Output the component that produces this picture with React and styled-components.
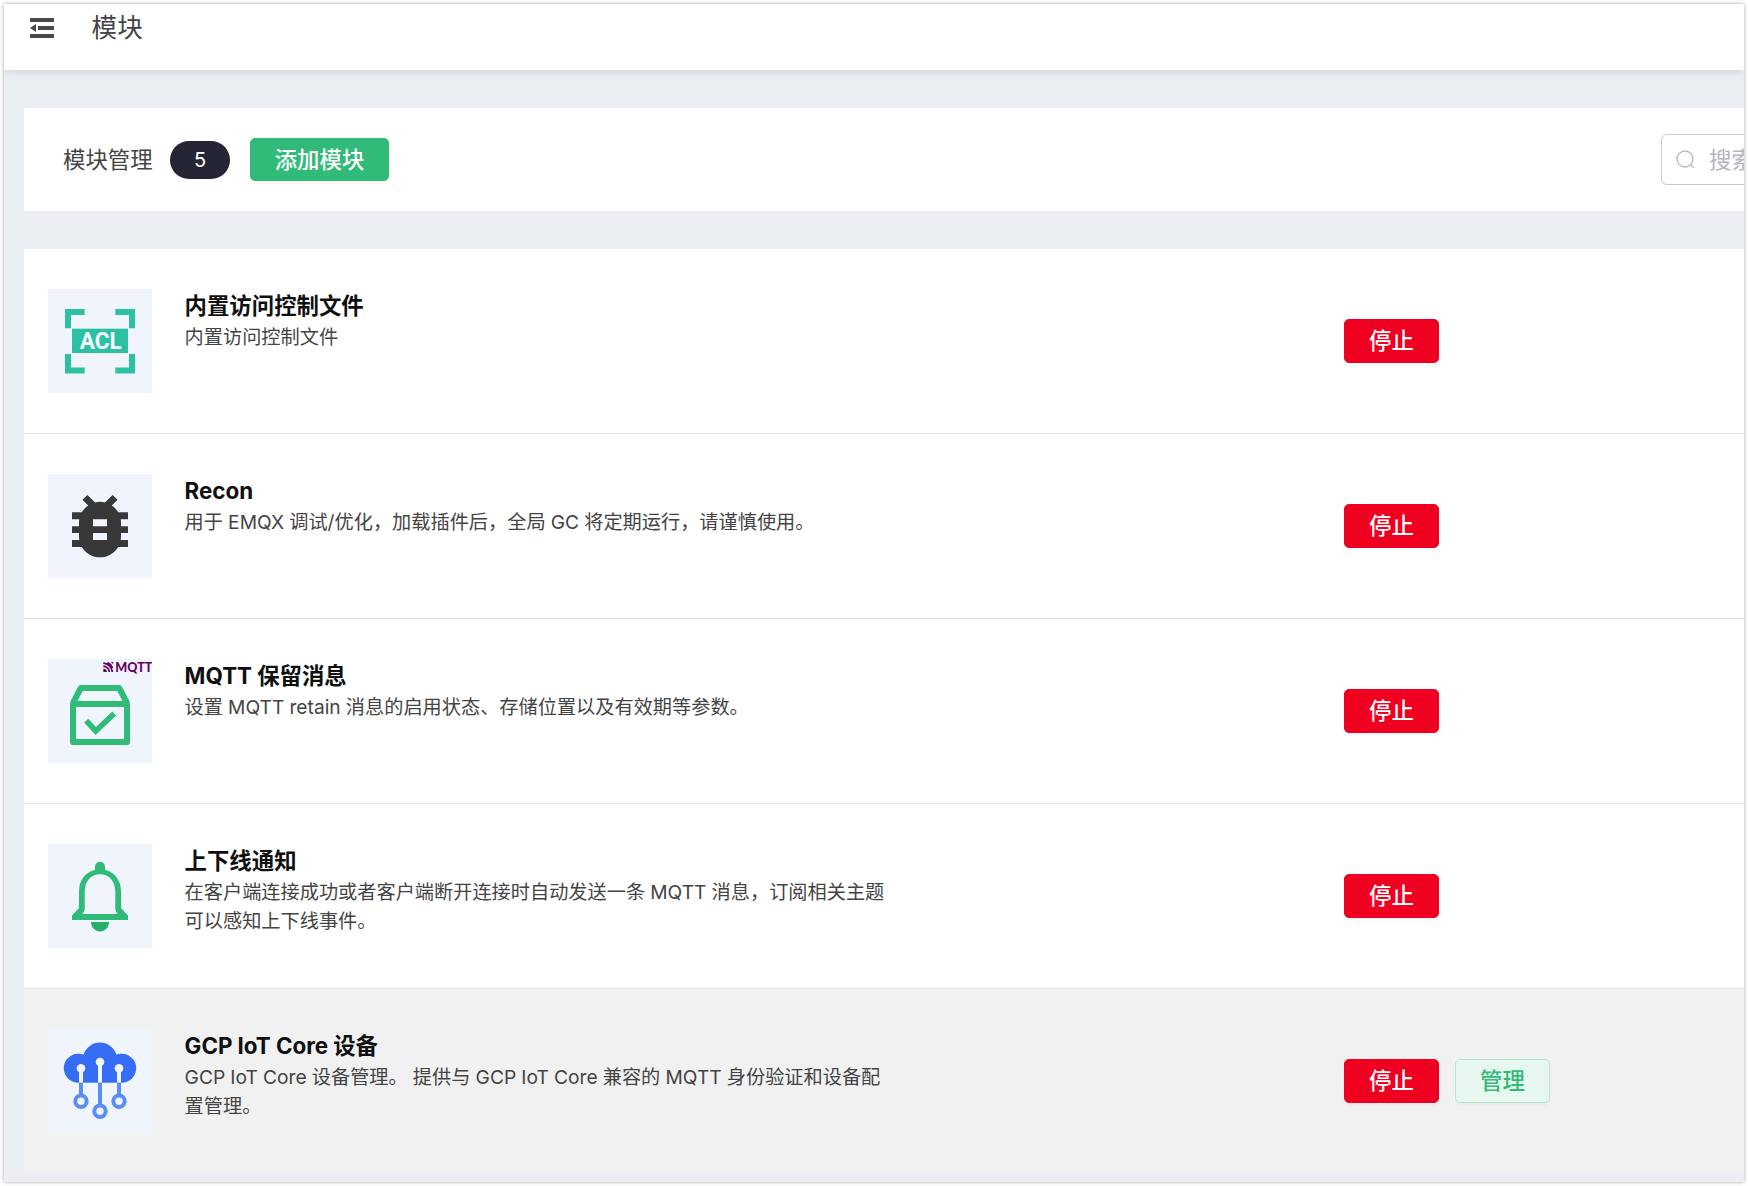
import React from "react";
import styled, { createGlobalStyle, css } from "styled-components";

const GlobalStyle = createGlobalStyle`
  *, *::before, *::after { box-sizing: border-box; }
  body {
    margin: 0;
    background: #fff;
    overflow: hidden;
    font-family: Inter, "Noto Sans CJK SC", sans-serif;
    font-size: 22.4px;
    color: #444;
  }
`;

const Page = styled.div`
  height: 1186px;
  padding: 4px;
`;

const Frame = styled.div`
  height: 1178px;
  background: #ebeef3;
  box-shadow: 0 0 4px rgba(0, 0, 0, 0.35);
  display: flex;
  flex-direction: column;
  overflow: hidden;
`;

const Header = styled.header`
  flex: none;
  height: 66px;
  padding: 0 26px;
  background: #fff;
  box-shadow: 0 1px 8px rgba(0, 21, 41, 0.14);
  display: flex;
  align-items: flex-start;
  gap: 37.6px;
`;

const FoldIcon = styled.svg`
  display: block;
  width: 24px;
  height: 20px;
  margin-top: 14px;
  fill: #4a4a4a;
`;

const PageTitle = styled.h1`
  margin: 4px 0 0;
  font-size: 25.6px;
  line-height: 40px;
  font-weight: 400;
`;

const Content = styled.main`
  flex: none;
  width: 1900px;
  padding: 38px 0 0 20px;
  display: flex;
  flex-direction: column;
  gap: 38px;
`;

const Toolbar = styled.section`
  height: 103px;
  padding: 0 39px;
  background: #fff;
  display: flex;
  align-items: center;
`;

const ToolbarLabel = styled.span`
  flex: none;
  line-height: 32px;
  width: 90px;
  margin-right: 17px;
  white-space: nowrap;
`;

const Count = styled.span`
  flex: none;
  width: 60px;
  height: 38px;
  margin-right: 20px;
  border-radius: 19px;
  background: #242633;
  color: #fff;
  font-size: 20px;
  line-height: 39px;
  text-align: center;
`;

const tones = {
  primary: css`
    background: #31bb78;
    border-color: #31bb78;
    color: #fff;
  `,
  danger: css`
    background: #f00020;
    border-color: #f00020;
    color: #fff;
  `,
  plain: css`
    background: #e6f7ef;
    border-color: #b4e6ce;
    color: #31bb78;
  `,
};

const Button = styled.button`
  flex: none;
  width: ${(p) => p.$width || 95}px;
  height: ${(p) => p.$height || 44}px;
  padding: 0;
  border: 1px solid;
  border-radius: 5px;
  box-shadow: 0 3px 1px rgba(0, 0, 0, 0.02);
  font: inherit;
  font-weight: 500;
  line-height: 40px;
  ${(p) => tones[p.$tone]}
`;

const SearchBox = styled.div`
  flex: none;
  width: 320px;
  height: 51px;
  margin-left: 1272px;
  padding-left: 14px;
  border: 1px solid #c9cbcf;
  border-radius: 6px;
  display: flex;
  align-items: center;
  gap: 14px;
  line-height: 32px;
  color: #b2b6c0;
`;

const SearchIcon = styled.svg`
  width: 19px;
  height: 19px;
  fill: none;
  stroke: currentColor;
  stroke-width: 1.3;
`;

const List = styled.ul`
  margin: 0;
  padding: 0;
  list-style: none;
`;

const Row = styled.li`
  height: 185px;
  padding: 40px 24px;
  border-bottom: 1px solid #e4e5e6;
  background: ${(p) => (p.$active ? "#f1f1f1" : "#fff")};
  display: flex;
  align-items: flex-start;

  &:last-child {
    height: 184px;
    border-bottom: 0;
  }
`;

const Thumb = styled.svg`
  flex: none;
  display: block;
  width: 104px;
  height: 104px;
  background: #f0f4fc;
`;

const Info = styled.div`
  flex: none;
  width: 1159px;
  padding: 1px 0 0 32.6px;
`;

const Name = styled.h2`
  margin: 0;
  font-size: 22.4px;
  line-height: 32px;
  font-weight: 700;
  word-spacing: -0.2px;
  color: #101010;
`;

const Description = styled.p`
  margin: 1px 0 0;
  width: 712px;
  font-size: 19.2px;
  line-height: 29px;
  word-spacing: -0.25px;
`;

const Actions = styled.div`
  height: 104px;
  margin-left: 33px;
  display: flex;
  align-items: center;
  gap: 16px;
`;

const AclIcon = () => (
  <Thumb viewBox="0 0 104 104">
    <g fill="none" stroke="#2dc1a4" strokeWidth="6">
      <path d="M20 39.3V23H36.7M67.3 23H84V39.3M20 65V81.5H36.7M67.3 81.5H84V65" />
    </g>
    <rect x="24" y="39.7" width="56" height="24.3" fill="#2dc1a4" />
    <text x="31.8" y="60" fontFamily="Roboto" fontWeight="700" fontSize="23.5" textLength="42" lengthAdjust="spacingAndGlyphs" fill="#f4fafd">ACL</text>
  </Thumb>
);

const BugIcon = () => (
  <Thumb viewBox="0 0 104 104">
    <path
      transform="translate(10 10.5) scale(3.5 3.47)"
      fill="#383838"
      d="M20 8h-2.81c-.45-.78-1.07-1.45-1.82-1.96L17 4.41 15.59 3l-2.17 2.17C12.96 5.06 12.49 5 12 5s-.96.06-1.41.17L8.41 3 7 4.41l1.62 1.63C7.88 6.55 7.26 7.22 6.81 8H4v2h2.09c-.05.33-.09.66-.09 1v1H4v2h2v1c0 .34.04.67.09 1H4v2h2.81c1.04 1.79 2.97 3 5.19 3s4.15-1.21 5.19-3H20v-2h-2.09c.05-.33.09-.66.09-1v-1h2v-2h-2v-1c0-.34-.04-.67-.09-1H20V8zm-6 8h-4v-2h4v2zm0-4h-4v-2h4v2z"
    />
  </Thumb>
);

const RetainIcon = () => (
  <Thumb viewBox="0 0 104 104">
    <g fill="#660066">
      <path d="M55.3 9.6V13H59A4 4 0 0 0 55.3 9.6Z" />
      <path d="M64.2 3H65.2V5.2A12 12 0 0 0 62.6 3Z" />
    </g>
    <g fill="none" stroke="#660066" strokeWidth="1.8">
      <path d="M55.3 7.2A6.6 6.6 0 0 1 61.4 13M55.3 4.2A9.6 9.6 0 0 1 64.4 13M59.6 3.6A11 11 0 0 1 64.6 8.8" />
    </g>
    <text x="67.3" y="13" fontFamily="Lato" fontWeight="900" fontSize="13.8" textLength="37" lengthAdjust="spacingAndGlyphs" fill="#660066">MQTT</text>
    <g fill="none" stroke="#31bb78" strokeWidth="6" strokeLinejoin="round">
      <path d="M25 45V83H79V45Z" />
      <path d="M25 44L32.8 29H71.2L79 44" />
    </g>
    <path d="M38.2 61.7L47.7 72L66.2 54.5" fill="none" stroke="#31bb78" strokeWidth="5.6" />
  </Thumb>
);

const BellIcon = () => (
  <Thumb viewBox="0 0 104 104">
    <path
      fill="#31bb78"
      fillRule="evenodd"
      d="M47 25.8V22.8A5 5 0 0 1 57 22.8V25.8C67 28.4 73 36.5 73 47.5V64L80 71.5V76H24V71.5L31 64V47.5C31 36.5 37 28.4 47 25.8ZM36.7 47.5V66L34.5 70H69.5L67.3 66V47.5C67.3 37 61 30.2 52 30.2S36.7 37 36.7 47.5Z"
    />
    <path d="M43 78H61C61 83.5 57 87.4 52 87.4S43 83.5 43 78Z" fill="#27b168" />
  </Thumb>
);

const CloudIcon = () => (
  <Thumb viewBox="0 0 104 104">
    <path d="M31.4 53.8A14.6 14.6 0 1 1 35.6 25.6A17.2 17.2 0 0 1 68.4 25.6A14.6 14.6 0 1 1 72.6 53.8Z" fill="#356df5" />
    <g fill="#f0f4fc">
      <circle cx="33" cy="39.2" r="4.3" />
      <circle cx="52" cy="33" r="4.3" />
      <circle cx="71" cy="39.2" r="4.3" />
    </g>
    <path d="M33 40V53.8M52 34V53.8M71 40V53.8" stroke="#f0f4fc" strokeWidth="4" />
    <g stroke="#598ef8" strokeWidth="4" fill="none">
      <path d="M33 53.8V66M52 53.8V76M71 53.8V66" />
      <circle cx="33" cy="72.3" r="5.7" />
      <circle cx="52" cy="82.3" r="5.7" />
      <circle cx="71" cy="72.3" r="5.7" />
    </g>
  </Thumb>
);

const modules = [
  { Icon: AclIcon, name: "内置访问控制文件", description: "内置访问控制文件" },
  { Icon: BugIcon, name: "Recon", description: "用于 EMQX 调试/优化，加载插件后，全局 GC 将定期运行，请谨慎使用。" },
  { Icon: RetainIcon, name: "MQTT 保留消息", description: "设置 MQTT retain 消息的启用状态、存储位置以及有效期等参数。" },
  { Icon: BellIcon, name: "上下线通知", description: "在客户端连接成功或者客户端断开连接时自动发送一条 MQTT 消息，订阅相关主题可以感知上下线事件。" },
  { Icon: CloudIcon, name: "GCP IoT Core 设备", description: "GCP IoT Core 设备管理。 提供与 GCP IoT Core 兼容的 MQTT 身份验证和设备配置管理。", active: true },
];

export default function App() {
  return (
    <Page lang="zh-CN">
      <GlobalStyle />
      <Frame>
        <Header>
          <FoldIcon viewBox="0 0 24 20">
            <path d="M0 0H24V4H0ZM8 8H24V12H8ZM0 16H24V20H0ZM0 10L6 6V14Z" />
          </FoldIcon>
          <PageTitle>模块</PageTitle>
        </Header>
        <Content>
          <Toolbar>
            <ToolbarLabel>模块管理</ToolbarLabel>
            <Count>5</Count>
            <Button $tone="primary" $width={139} $height={43}>添加模块</Button>
            <SearchBox>
              <SearchIcon viewBox="0 0 19 19">
                <circle cx="9" cy="9" r="8" />
                <path d="M14.8 14.8L18 18" />
              </SearchIcon>
              搜索
            </SearchBox>
          </Toolbar>
          <List>
            {modules.map(({ Icon, name, description, active }) => (
              <Row key={name} $active={active}>
                <Icon />
                <Info>
                  <Name>{name}</Name>
                  <Description>{description}</Description>
                </Info>
                <Actions>
                  <Button $tone="danger">停止</Button>
                  {active && <Button $tone="plain">管理</Button>}
                </Actions>
              </Row>
            ))}
          </List>
        </Content>
      </Frame>
    </Page>
  );
}
